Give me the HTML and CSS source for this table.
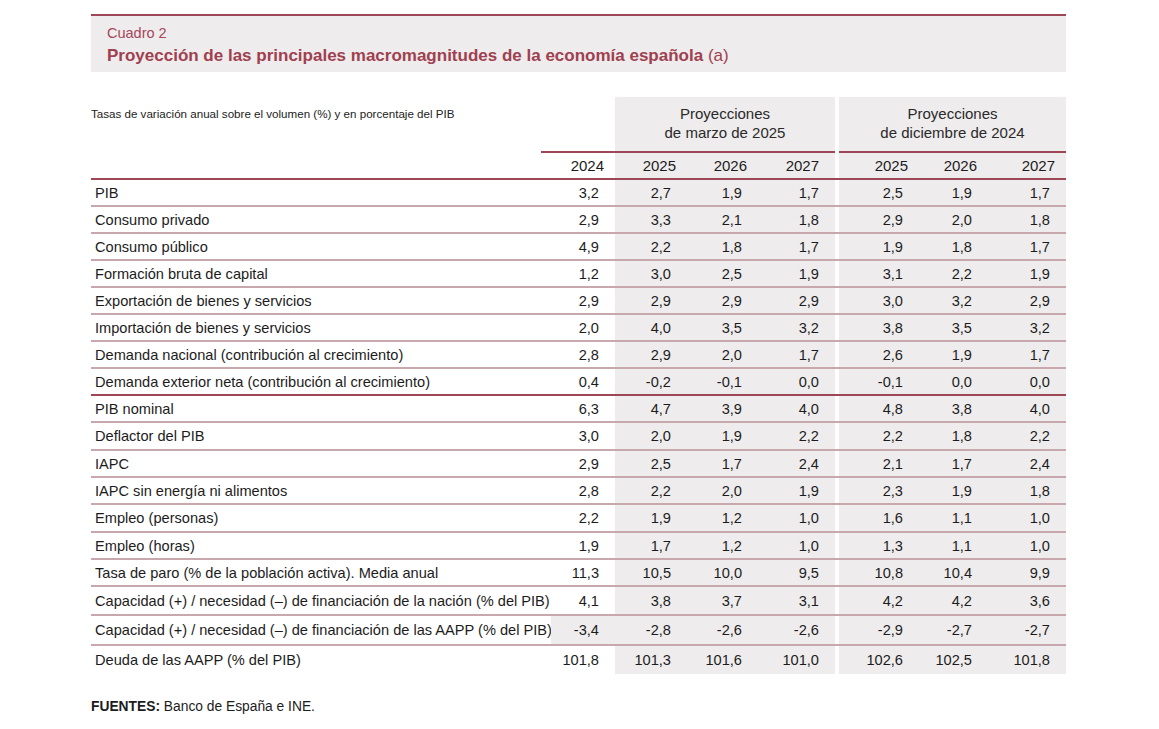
FILE: index.html
```html
<!DOCTYPE html>
<html lang="es">
<head>
<meta charset="utf-8">
<title>Cuadro 2</title>
<link rel="stylesheet" href="styles.css">
</head>
<body>
<div class="page">
  <header class="box-head">
    <div class="kicker">Cuadro 2</div>
    <h1 class="title">Proyección de las principales macromagnitudes de la economía española <span class="note">(a)</span></h1>
  </header>

  <div class="table">
    <div class="row head1">
      <div class="cell sub">Tasas de variación anual sobre el volumen (%) y en porcentaje del PIB</div>
      <div class="cell ruled"></div>
      <div class="cell grp ruled">Proyecciones<br>de marzo de 2025</div>
      <div class="cell gap"></div>
      <div class="cell grp ruled">Proyecciones<br>de diciembre de 2024</div>
    </div>
    <div class="row head2">
      <div class="cell"></div>
      <div class="cell yr">2024</div>
      <div class="cell yr sh">2025</div>
      <div class="cell yr sh">2026</div>
      <div class="cell yr sh c3">2027</div>
      <div class="cell gap"></div>
      <div class="cell yr sh">2025</div>
      <div class="cell yr sh">2026</div>
      <div class="cell yr sh">2027</div>
    </div>

    <div class="row"><div class="cell lab">PIB</div><div class="cell v">3,2</div><div class="cell v sh">2,7</div><div class="cell v sh">1,9</div><div class="cell v sh">1,7</div><div class="cell gap"></div><div class="cell v sh">2,5</div><div class="cell v sh">1,9</div><div class="cell v sh">1,7</div></div>
    <div class="row"><div class="cell lab">Consumo privado</div><div class="cell v">2,9</div><div class="cell v sh">3,3</div><div class="cell v sh">2,1</div><div class="cell v sh">1,8</div><div class="cell gap"></div><div class="cell v sh">2,9</div><div class="cell v sh">2,0</div><div class="cell v sh">1,8</div></div>
    <div class="row"><div class="cell lab">Consumo público</div><div class="cell v">4,9</div><div class="cell v sh">2,2</div><div class="cell v sh">1,8</div><div class="cell v sh">1,7</div><div class="cell gap"></div><div class="cell v sh">1,9</div><div class="cell v sh">1,8</div><div class="cell v sh">1,7</div></div>
    <div class="row"><div class="cell lab">Formación bruta de capital</div><div class="cell v">1,2</div><div class="cell v sh">3,0</div><div class="cell v sh">2,5</div><div class="cell v sh">1,9</div><div class="cell gap"></div><div class="cell v sh">3,1</div><div class="cell v sh">2,2</div><div class="cell v sh">1,9</div></div>
    <div class="row"><div class="cell lab">Exportación de bienes y servicios</div><div class="cell v">2,9</div><div class="cell v sh">2,9</div><div class="cell v sh">2,9</div><div class="cell v sh">2,9</div><div class="cell gap"></div><div class="cell v sh">3,0</div><div class="cell v sh">3,2</div><div class="cell v sh">2,9</div></div>
    <div class="row"><div class="cell lab">Importación de bienes y servicios</div><div class="cell v">2,0</div><div class="cell v sh">4,0</div><div class="cell v sh">3,5</div><div class="cell v sh">3,2</div><div class="cell gap"></div><div class="cell v sh">3,8</div><div class="cell v sh">3,5</div><div class="cell v sh">3,2</div></div>
    <div class="row"><div class="cell lab">Demanda nacional (contribución al crecimiento)</div><div class="cell v">2,8</div><div class="cell v sh">2,9</div><div class="cell v sh">2,0</div><div class="cell v sh">1,7</div><div class="cell gap"></div><div class="cell v sh">2,6</div><div class="cell v sh">1,9</div><div class="cell v sh">1,7</div></div>
    <div class="row split"><div class="cell lab">Demanda exterior neta (contribución al crecimiento)</div><div class="cell v">0,4</div><div class="cell v sh">-0,2</div><div class="cell v sh">-0,1</div><div class="cell v sh">0,0</div><div class="cell gap"></div><div class="cell v sh">-0,1</div><div class="cell v sh">0,0</div><div class="cell v sh">0,0</div></div>
    <div class="row"><div class="cell lab">PIB nominal</div><div class="cell v">6,3</div><div class="cell v sh">4,7</div><div class="cell v sh">3,9</div><div class="cell v sh">4,0</div><div class="cell gap"></div><div class="cell v sh">4,8</div><div class="cell v sh">3,8</div><div class="cell v sh">4,0</div></div>
    <div class="row h28"><div class="cell lab">Deflactor del PIB</div><div class="cell v">3,0</div><div class="cell v sh">2,0</div><div class="cell v sh">1,9</div><div class="cell v sh">2,2</div><div class="cell gap"></div><div class="cell v sh">2,2</div><div class="cell v sh">1,8</div><div class="cell v sh">2,2</div></div>
    <div class="row"><div class="cell lab">IAPC</div><div class="cell v">2,9</div><div class="cell v sh">2,5</div><div class="cell v sh">1,7</div><div class="cell v sh">2,4</div><div class="cell gap"></div><div class="cell v sh">2,1</div><div class="cell v sh">1,7</div><div class="cell v sh">2,4</div></div>
    <div class="row"><div class="cell lab">IAPC sin energía ni alimentos</div><div class="cell v">2,8</div><div class="cell v sh">2,2</div><div class="cell v sh">2,0</div><div class="cell v sh">1,9</div><div class="cell gap"></div><div class="cell v sh">2,3</div><div class="cell v sh">1,9</div><div class="cell v sh">1,8</div></div>
    <div class="row h28"><div class="cell lab">Empleo (personas)</div><div class="cell v">2,2</div><div class="cell v sh">1,9</div><div class="cell v sh">1,2</div><div class="cell v sh">1,0</div><div class="cell gap"></div><div class="cell v sh">1,6</div><div class="cell v sh">1,1</div><div class="cell v sh">1,0</div></div>
    <div class="row"><div class="cell lab">Empleo (horas)</div><div class="cell v">1,9</div><div class="cell v sh">1,7</div><div class="cell v sh">1,2</div><div class="cell v sh">1,0</div><div class="cell gap"></div><div class="cell v sh">1,3</div><div class="cell v sh">1,1</div><div class="cell v sh">1,0</div></div>
    <div class="row"><div class="cell lab">Tasa de paro (% de la población activa). Media anual</div><div class="cell v">11,3</div><div class="cell v sh">10,5</div><div class="cell v sh">10,0</div><div class="cell v sh">9,5</div><div class="cell gap"></div><div class="cell v sh">10,8</div><div class="cell v sh">10,4</div><div class="cell v sh">9,9</div></div>
    <div class="row tall"><div class="cell lab">Capacidad (+) / necesidad (–) de financiación de la nación (% del PIB)</div><div class="cell v">4,1</div><div class="cell v sh">3,8</div><div class="cell v sh">3,7</div><div class="cell v sh">3,1</div><div class="cell gap"></div><div class="cell v sh">4,2</div><div class="cell v sh">4,2</div><div class="cell v sh">3,6</div></div>
    <div class="row taller"><div class="cell lab">Capacidad (+) / necesidad (–) de financiación de las AAPP (% del PIB)</div><div class="cell v part">-3,4</div><div class="cell v sh">-2,8</div><div class="cell v sh">-2,6</div><div class="cell v sh">-2,6</div><div class="cell gap"></div><div class="cell v sh">-2,9</div><div class="cell v sh">-2,7</div><div class="cell v sh">-2,7</div></div>
    <div class="row last"><div class="cell lab">Deuda de las AAPP (% del PIB)</div><div class="cell v">101,8</div><div class="cell v sh">101,3</div><div class="cell v sh">101,6</div><div class="cell v sh">101,0</div><div class="cell gap"></div><div class="cell v sh">102,6</div><div class="cell v sh">102,5</div><div class="cell v sh">101,8</div></div>
  </div>

  <p class="source"><b>FUENTES:</b> Banco de España e INE.</p>
</div>
</body>
</html>
```

FILE: styles.css
```css
* { box-sizing: border-box; }

html, body {
  margin: 0;
  padding: 0;
  background: #ffffff;
}

body {
  font-family: "Liberation Sans", Arial, sans-serif;
  color: #1c1c1c;
}

.page {
  width: 975px;
  margin-left: 91px;
  padding-top: 14px;
}

/* ---------- heading box ---------- */
.box-head {
  height: 58px;
  background: #eeeced;
  border-top: 2px solid #9d4655;
  padding: 9px 16px 0 16px;
  margin-bottom: 25px;
}

.kicker {
  font-size: 14.5px;
  line-height: 17px;
  color: #a5485a;
}

.title {
  margin: 4px 0 0 0;
  font-size: 17px;
  line-height: 20px;
  font-weight: bold;
  color: #a0404f;
}

.title .note {
  font-weight: normal;
}

/* ---------- table ---------- */
.table {
  width: 975px;
}

.row {
  display: grid;
  grid-template-columns: 450px 74px 72px 71px 77px 4px 80px 69px 78px;
  height: 27px;
  border-bottom: 2px solid #c9a8ad;
  font-size: 14.6px;
}

.row.split,
.row.head2 {
  border-bottom-color: #9d4655;
}

.row.h28 { height: 28px; }
.row.tall { height: 29px; }
.row.taller { height: 30px; }
.row.last { height: 28px; border-bottom: 0; }

.cell {
  display: flex;
  align-items: center;
  white-space: nowrap;
}

.sh { background: #eeeced; }
.gap { background: #ffffff; }

.lab {
  padding-left: 4px;
}

.v {
  justify-content: flex-end;
  padding-right: 16px;
}

.v.part {
  background: linear-gradient(to right, transparent 10px, #eeeced 10px);
}

/* header row 1 */
.row.head1 {
  grid-template-columns: 450px 74px 220px 4px 227px;
  height: 56px;
  border-bottom: 0;
}

.sub {
  align-items: flex-start;
  font-size: 11.6px;
  line-height: 14px;
  padding-top: 10px;
  color: #222;
}

.ruled {
  border-bottom: 2px solid #9d4655;
}

.grp {
  background: #eeeced;
  justify-content: center;
  text-align: center;
  align-items: flex-start;
  padding-top: 7px;
  font-size: 15px;
  line-height: 19px;
  color: #2a2a2a;
}

/* header row 2 */
.row.head2 {
  height: 27px;
  font-size: 15px;
}

.yr {
  justify-content: flex-end;
  padding-right: 11px;
}

.yr.c3 { padding-right: 16px; }

/* ---------- source ---------- */
.source {
  margin: 25px 0 0 0;
  font-size: 13.8px;
  line-height: 16px;
  color: #1c1c1c;
}
```
